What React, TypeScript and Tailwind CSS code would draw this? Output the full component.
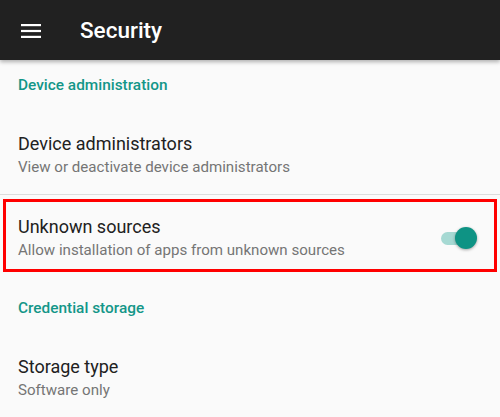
import React from 'react';

const font = { fontFamily: 'Roboto, "Noto Sans", sans-serif' };

const MenuIcon = () => (
  <svg width="20" height="14" viewBox="0 0 20 14" fill="#ffffff">
    <rect x="0" y="0" width="20" height="2.2" />
    <rect x="0" y="5.9" width="20" height="2.2" />
    <rect x="0" y="11.8" width="20" height="2.2" />
  </svg>
);

const Category = ({ label, className = '' }: { label: string; className?: string }) => (
  <div className={`pl-[18px] text-[15.4px] leading-[20px] font-medium text-[#139688] ${className}`}>{label}</div>
);

const Toggle = () => (
  <div className="relative w-[36px] h-[23px] flex items-center">
    <div className="w-[30px] h-[13px] rounded-full bg-[#a6d9d3]" />
    <div className="absolute right-0 top-0 w-[22px] h-[22px] rounded-full bg-[#0e9384] shadow-[0_1px_3px_rgba(0,0,0,0.35)]" />
  </div>
);

export default function App() {
  return (
    <div className="w-[500px] h-[417px] overflow-hidden bg-[#fafafa]" style={font}>
      {/* toolbar */}
      <div className="relative z-10 h-[60px] bg-[#212121] flex items-center shadow-[0_2px_4px_rgba(0,0,0,0.3)]">
        <div className="pl-[21px] w-[80px] flex items-center pt-[1px]">
          <MenuIcon />
        </div>
        <h1 className="text-[22.5px] font-medium text-white leading-none">Security</h1>
      </div>

      <Category label="Device administration" className="pt-[15px]" />

      <div className="pl-[18px] pt-[38px] pb-[17px]">
        <div className="text-[18px] leading-[22px] text-[#212121]">Device administrators</div>
        <div className="mt-[2px] text-[15.1px] leading-[20px] text-[#757575]">View or deactivate device administrators</div>
      </div>

      <div className="h-px bg-[#dcdcdc]" />

      <div className="mx-[3px] mt-[4px] border-[3px] border-[#ff0000] flex items-center justify-between pl-[12px] pr-[17px] pt-[14px] pb-[9px]">
        <div>
          <div className="text-[18px] leading-[22px] text-[#212121]">Unknown sources</div>
          <div className="mt-[2px] text-[15.1px] leading-[20px] text-[#757575]">
            Allow installation of apps from unknown sources
          </div>
        </div>
        <Toggle />
      </div>

      <Category label="Credential storage" className="pt-[26px]" />

      <div className="pl-[18px] pt-[38px]">
        <div className="text-[18px] leading-[22px] text-[#212121]">Storage type</div>
        <div className="mt-[2px] text-[15.1px] leading-[20px] text-[#757575]">Software only</div>
      </div>
    </div>
  );
}
